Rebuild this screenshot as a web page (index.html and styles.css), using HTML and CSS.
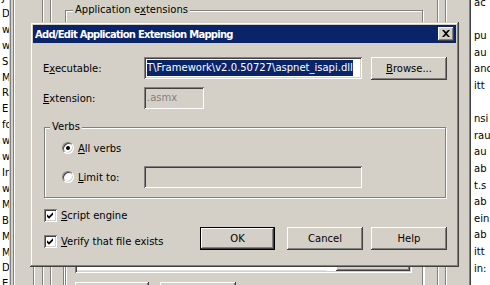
FILE: index.html
```html
<!DOCTYPE html>
<html>
<head>
<meta charset="utf-8">
<link rel="stylesheet" href="styles.css">
</head>
<body>
<div class="screen">
  <div class="left-list">
    <div>J</div><div>D</div><div>w</div><div>w</div><div>S</div><div>M</div><div>R</div><div>E</div><div>fo</div><div>w</div><div>w</div><div>In</div><div>w</div><div>M</div><div>B</div><div>M</div><div>M</div><div>D</div><div>E</div>
  </div>
  <div class="vline v13"></div>
  <div class="vline v42"></div>
  <div class="vline v50"></div>
  <div class="vline v33 short"></div>
  <div class="vline v63 short"></div>
  <div class="vline v423 short"></div>
  <div class="vline v437"></div>
  <div class="vline v445"></div>

  <div class="app-group">
    <span class="legend">Application e<u>x</u>tensions</span>
  </div>
  <div class="app-list">
    <div class="app-head"><div class="hcell h1"></div><div class="hcell h2"></div><div class="hcell h3"></div></div>
    <div class="app-body"></div>
    <div class="app-scroll"><div class="track"></div><div class="thumb"></div></div>
  </div>
  <div class="app-buttons">
    <div class="btn bgbtn"></div>
    <div class="btn bgbtn"></div>
  </div>

  <div class="right-list">
    <div>ac</div><div>&nbsp;</div><div>pu</div><div>au</div><div>anc</div><div>itt</div><div>&nbsp;</div><div>nsi</div><div>rau</div><div>au</div><div>ab</div><div>t.s</div><div>ab</div><div>ein</div><div>ab</div><div>itt</div><div>in:</div>
  </div>

  <div class="dialog">
    <div class="titlebar">
      <span class="title">Add/Edit Application Extension Mapping</span>
      <div class="close">
        <svg width="8" height="7" viewBox="0 0 8 7"><path d="M0 0h2l2 2l2-2h2l-3 3.5l3 3.5h-2l-2-2l-2 2h-2l3-3.5z" fill="#000"/></svg>
      </div>
    </div>
    <div class="body">
      <div class="row">
        <span class="label">E<u>x</u>ecutable:</span>
        <div class="field exec"><span class="sel">T\Framework\v2.0.50727\aspnet_isapi.dll</span></div>
        <div class="btn browse"><span><u>B</u>rowse...</span></div>
      </div>
      <div class="row row2">
        <span class="label"><u>E</u>xtension:</span>
        <div class="field disabled ext">.asmx</div>
      </div>
      <div class="group">
        <span class="legend">Verbs</span>
        <div class="radio-row">
          <span class="radio on"><span class="dot"></span></span>
          <span class="radio-label"><u>A</u>ll verbs</span>
        </div>
        <div class="radio-row row-gap">
          <span class="radio"></span>
          <span class="radio-label"><u>L</u>imit to:</span>
          <div class="field limit"></div>
        </div>
      </div>
      <div class="bottom">
        <div class="checks">
          <div class="check">
            <span class="box"><svg width="9" height="9" viewBox="0 0 9 9"><path d="M1 3.2l2 2l4-4v2.6l-4 4l-2-2z" fill="#000"/></svg></span>
            <span><u>S</u>cript engine</span>
          </div>
          <div class="check check2">
            <span class="box"><svg width="9" height="9" viewBox="0 0 9 9"><path d="M1 3.2l2 2l4-4v2.6l-4 4l-2-2z" fill="#000"/></svg></span>
            <span><u>V</u>erify that file exists</span>
          </div>
        </div>
        <div class="buttons">
          <div class="btn default ok">OK</div>
          <div class="btn cancel">Cancel</div>
          <div class="btn help">Help</div>
        </div>
      </div>
    </div>
  </div>
</div>
</body>
</html>
```

FILE: styles.css
```css
* { box-sizing: border-box; }
html, body { margin: 0; padding: 0; }
body { background: #d4d0c8; }
u { text-decoration: underline; text-underline-offset: 1px; }

.screen {
  position: relative;
  width: 490px;
  height: 285px;
  overflow: hidden;
  background: #d4d0c8;
  font-family: "DejaVu Sans", "Liberation Sans", sans-serif;
  font-size: 10px;
  color: #000;
}

/* background windows */
.left-list {
  position: absolute;
  left: 0;
  top: 0;
  width: 10px;
  height: 285px;
  background: #fff;
  overflow: hidden;
  padding-left: 2px;
  padding-top: 0;
  line-height: 15.9px;
  border-right: 1px solid #d4d0c8;
  box-shadow: 1px 0 0 #808080;
  white-space: nowrap;
}
.left-list div:first-child { margin-top: -10px; }

.vline {
  position: absolute;
  top: 0;
  width: 1px;
  height: 285px;
  background: #808080;
  box-shadow: 1px 0 0 #fff;
}
.vline.short { top: 262px; height: 30px; }
.v13 { left: 13px; }
.v33 { left: 33px; }
.v42 { left: 42px; }
.v50 { left: 50px; }
.v63 { left: 63px; }
.v423 { left: 423px; }
.v437 { left: 437px; }
.v445 { left: 445px; }

.app-group {
  position: absolute;
  left: 65px;
  top: 10px;
  width: 358px;
  height: 300px;
  border: 1px solid #808080;
  box-shadow: inset 1px 1px 0 #fff, 1px 1px 0 #fff;
}
.legend {
  position: absolute;
  top: -7px;
  left: 7px;
  padding: 0 2px;
  background: #d4d0c8;
  line-height: 12px;
  white-space: nowrap;
}
.app-list {
  position: absolute;
  left: 75px;
  top: 22px;
  width: 337px;
  height: 251px;
  background: #fff;
  box-shadow: inset 1px 1px 0 #808080, inset -1px -1px 0 #fff, inset 2px 2px 0 #404040, inset -2px -2px 0 #d4d0c8;
  padding: 2px;
  display: flex;
  flex-direction: column;
}
.app-head { display: flex; height: 17px; }
.hcell {
  height: 17px;
  background: #d4d0c8;
  box-shadow: inset -1px -1px 0 #404040, inset 1px 1px 0 #fff, inset -2px -2px 0 #808080;
}
.h1 { width: 60px; }
.h2 { width: 203px; }
.h3 { flex: 1; }
.app-body { flex: 1; }
.app-scroll { display: flex; height: 16px; }
.app-scroll .track { width: 251px; background: #fff; box-shadow: inset 0 -1px 0 #e4e2dc; }
.app-scroll .thumb {
  margin-left: 10px;
  width: 74px;
  background: #d4d0c8;
  box-shadow: inset -1px -1px 0 #404040, inset 1px 1px 0 #fff, inset -2px -2px 0 #808080;
}
.app-buttons {
  position: absolute;
  left: 75px;
  top: 282px;
  display: flex;
  gap: 11px;
}
.bgbtn { width: 74px; height: 23px; }
.bgbtn + .bgbtn { width: 76px; }

.right-list {
  position: absolute;
  left: 469px;
  top: 0;
  width: 30px;
  height: 285px;
  background: #fff;
  border-left: 1px solid #808080;
  box-shadow: inset 1px 0 0 #404040;
  padding-left: 4px;
  line-height: 16.6px;
  overflow: hidden;
  white-space: nowrap;
}
.right-list div:first-child { margin-top: -5px; }

/* dialog */
.dialog {
  position: absolute;
  left: 30px;
  top: 22px;
  width: 429px;
  height: 245px;
  padding: 3px;
  background: #d4d0c8;
  box-shadow: inset -1px -1px 0 #404040, inset 1px 1px 0 #d4d0c8, inset -2px -2px 0 #808080, inset 2px 2px 0 #fff;
}
.titlebar {
  height: 18px;
  background: #0a246a;
  color: #fff;
  display: flex;
  align-items: center;
  padding: 0 2px 0 2px;
}
.title {
  font-weight: bold;
  font-size: 10px;
  letter-spacing: -0.75px;
  white-space: nowrap;
}
.close {
  margin-left: auto;
  width: 16px;
  height: 14px;
  background: #d4d0c8;
  box-shadow: inset -1px -1px 0 #404040, inset 1px 1px 0 #fff, inset -2px -2px 0 #808080;
  display: flex;
  align-items: center;
  justify-content: center;
  padding-bottom: 1px;
  padding-right: 1px;
}
.close svg { display: block; }

.body { padding: 14px 9px 0 10px; }
.row { display: flex; align-items: center; height: 22px; }
.row2 { margin-top: 8px; }
.label { width: 101px; white-space: nowrap; }

.field {
  height: 22px;
  background: #fff;
  box-shadow: inset 1px 1px 0 #808080, inset -1px -1px 0 #fff, inset 2px 2px 0 #404040, inset -2px -2px 0 #d4d0c8;
  padding: 3px 3px;
  white-space: nowrap;
  overflow: hidden;
  line-height: 16px;
}
.exec { width: 218px; }
.sel {
  display: inline-block;
  background: #0a246a;
  color: #fff;
  height: 16px;
  line-height: 16px;
}
.disabled { background: #d4d0c8; color: #808080; }
.ext { width: 60px; }
.limit { width: 218px; background: #d4d0c8; }

.btn {
  height: 23px;
  background: #d4d0c8;
  box-shadow: inset -1px -1px 0 #404040, inset 1px 1px 0 #fff, inset -2px -2px 0 #808080;
  display: flex;
  align-items: center;
  justify-content: center;
  white-space: nowrap;
}
.browse { width: 76px; margin-left: 9px; }

.group {
  position: relative;
  margin-left: 1px;
  margin-top: 18px;
  width: 402px;
  border: 1px solid #808080;
  box-shadow: inset 1px 1px 0 #fff, 1px 1px 0 #fff;
  padding: 9px 0 9px 17px;
}
.group .legend { left: 5px; }
.radio-row { display: flex; align-items: center; height: 22px; }
.row-gap { margin-top: 7px; }
.radio {
  width: 12px;
  height: 12px;
  border-radius: 50%;
  background: #fff;
  border: 1px solid;
  border-color: #808080 #fff #fff #808080;
  box-shadow: inset 1px 1px 0 #404040, inset -1px -1px 0 #d4d0c8;
  display: flex;
  align-items: center;
  justify-content: center;
  flex: none;
}
.radio .dot { width: 4px; height: 4px; border-radius: 50%; background: #000; }
.radio-label { width: 66px; margin-left: 4px; white-space: nowrap; }

.bottom { display: flex; margin-top: 11px; }
.checks { margin-left: 1px; }
.check { display: flex; align-items: center; height: 13px; white-space: nowrap; }
.check2 { margin-top: 13px; }
.box {
  width: 13px;
  height: 13px;
  background: #fff;
  box-shadow: inset 1px 1px 0 #808080, inset -1px -1px 0 #fff, inset 2px 2px 0 #404040, inset -2px -2px 0 #d4d0c8;
  display: flex;
  align-items: center;
  justify-content: center;
  margin-right: 4px;
  flex: none;
}
.box svg { display: block; }
.buttons { margin-left: auto; margin-top: 18px; display: flex; }
.ok { width: 75px; }
.default { border: 1px solid #000; }
.cancel { width: 76px; margin-left: 12px; }
.help { width: 76px; margin-left: 8px; }
```
